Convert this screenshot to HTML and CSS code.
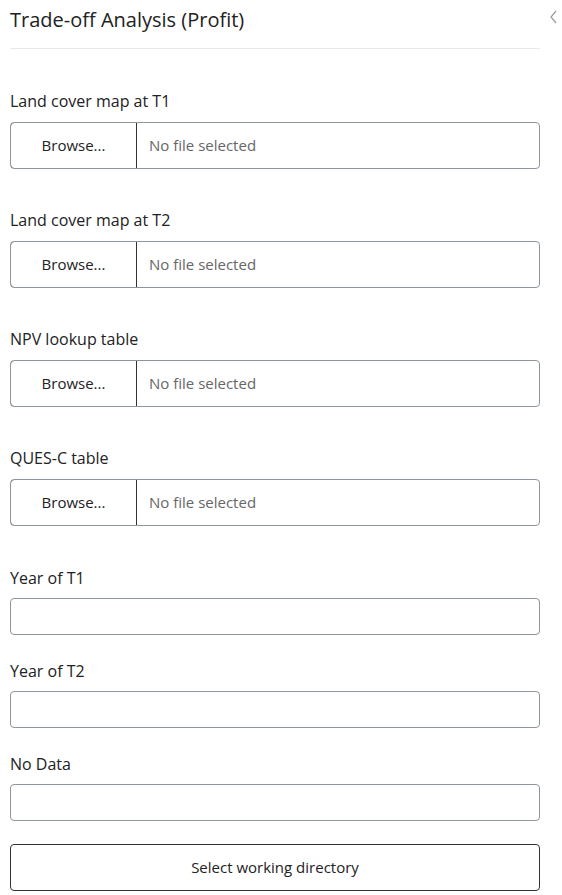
FILE: index.html
```html
<!DOCTYPE html>
<html>
<head>
<meta charset="utf-8">
<link rel="stylesheet" href="styles.css">
</head>
<body>
<div class="panel">
  <div class="header">
    <h1 class="title">Trade-off Analysis (Profit)</h1>
    <svg class="chevron" width="10" height="14" viewBox="0 0 10 14"><path d="M7 1 L2 7 L7 13" fill="none" stroke="#999" stroke-width="1.2"/></svg>
  </div>
  <div class="form">
    <div class="field file-field">
      <label class="label">Land cover map at T1</label>
      <div class="file"><span class="browse">Browse...</span><span class="fname">No file selected</span></div>
    </div>
    <div class="field file-field">
      <label class="label">Land cover map at T2</label>
      <div class="file"><span class="browse">Browse...</span><span class="fname">No file selected</span></div>
    </div>
    <div class="field file-field">
      <label class="label">NPV lookup table</label>
      <div class="file"><span class="browse">Browse...</span><span class="fname">No file selected</span></div>
    </div>
    <div class="field file-field">
      <label class="label">QUES-C table</label>
      <div class="file"><span class="browse">Browse...</span><span class="fname">No file selected</span></div>
    </div>
    <div class="field text-field first-text">
      <label class="label">Year of T1</label>
      <input class="input" type="text">
    </div>
    <div class="field text-field">
      <label class="label">Year of T2</label>
      <input class="input" type="text">
    </div>
    <div class="field text-field">
      <label class="label">No Data</label>
      <input class="input" type="text">
    </div>
    <button class="dir-btn">Select working directory</button>
  </div>
</div>
</body>
</html>
```
FILE: styles.css
```css
* { box-sizing: border-box; }
html, body { margin: 0; padding: 0; background: #fff; }
body { font-family: "Open Sans", "Noto Sans", sans-serif; color: #222; }
.panel { width: 562px; padding: 0 22px 0 10px; }
.header { height: 49px; border-bottom: 1px solid #e9e9e9; position: relative; }
.title { margin: 0; font-size: 20px; font-weight: 400; line-height: 28px; padding-top: 6px; color: #222; letter-spacing: 0; }
.chevron { position: absolute; right: -19px; top: 10px; }
.form { display: flex; flex-direction: column; padding-top: 42px; }
.field { display: flex; flex-direction: column; }
.label { font-size: 16px; line-height: 20px; height: 20px; color: #222; }
.file-field + .file-field { margin-top: 41px; }
.file-field .label { margin-bottom: 11px; }
.file { display: flex; height: 47px; border: 1px solid #8f959c; border-radius: 4px; overflow: hidden; font-size: 15px; }
.browse { width: 127px; display: flex; align-items: center; justify-content: center; border: 1px solid #333; margin: -1px 0 -1px -1px; border-radius: 4px 0 0 4px; color: #222; padding-bottom: 2px; }
.fname { display: flex; align-items: center; padding-left: 12px; color: #666; padding-bottom: 2px; }
.first-text { margin-top: 42px; }
.text-field + .text-field { margin-top: 26px; }
.text-field .label { margin-bottom: 10px; }
.input { height: 37px; border: 1px solid #8f959c; border-radius: 4px; width: 100%; font: inherit; }
.dir-btn { margin-top: 23px; height: 47px; width: 100%; background: #fff; border: 1px solid #333; border-radius: 4px; font-family: "Open Sans", sans-serif; font-size: 15px; color: #222; padding: 0 0 2px; }
```
